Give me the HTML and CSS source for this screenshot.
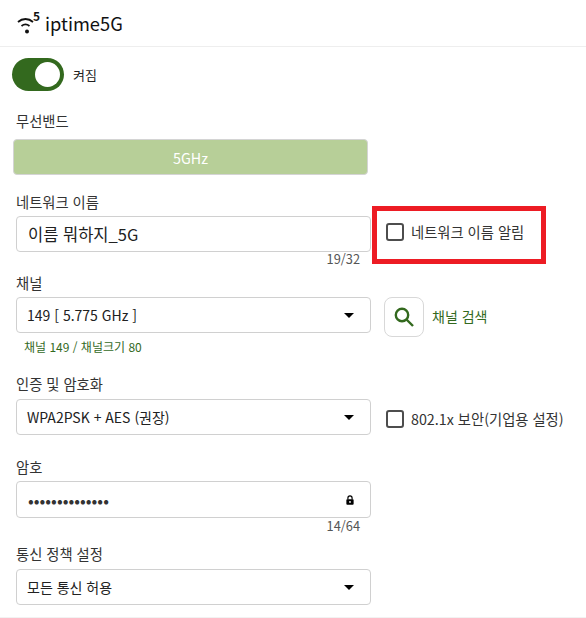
FILE: index.html
```html
<!DOCTYPE html>
<html lang="ko">
<head>
    <meta charset="UTF-8">
    <meta name="viewport" content="width=device-width, initial-scale=1.0">
    <link rel="stylesheet" href="styles.css">
</head>
<body>
    <div class="header">
        <svg class="wifi" width="26" height="26" viewBox="0 0 26 26" fill="none" stroke="#111" stroke-width="1.8">
            <path d="M3 11 C7.5 7 13.5 7 18 11"/>
            <path d="M6.5 15 C9 13 12 13 14.5 15"/>
            <circle cx="12" cy="20.5" r="2" fill="#111" stroke="none"/>
        </svg>
        <span class="wifi-band">5</span>
        <h1>iptime5G</h1>
    </div>

    <div class="form">
        <div class="switch-row">
            <span class="switch"><span class="knob"></span></span>
            <span class="switch-label">켜짐</span>
        </div>

        <div class="label band-label">무선밴드</div>
        <button class="band">5GHz</button>

        <div class="label name-label">네트워크 이름</div>
        <div class="row name-row">
            <div class="control">
                <span>이름 뭐하지_5G</span>
            </div>
            <label class="check highlight"><span class="box"></span>네트워크 이름 알림</label>
        </div>
        <div class="counter">19/32</div>

        <div class="label channel-label">채널</div>
        <div class="row">
            <div class="control small">
                <span>149 [ 5.775 GHz ]</span>
                <span class="caret"></span>
            </div>
            <button class="search">
                <svg width="22" height="22" viewBox="0 0 22 22" fill="none" stroke="#33691e" stroke-width="2.4">
                    <circle cx="9" cy="9" r="6.2"/>
                    <path d="M13.5 13.5 L20 20"/>
                </svg>
            </button>
            <span class="search-label">채널 검색</span>
        </div>
        <div class="hint">채널 149 / 채널크기 80</div>

        <div class="label auth-label">인증 및 암호화</div>
        <div class="row">
            <div class="control small">
                <span>WPA2PSK + AES (권장)</span>
                <span class="caret"></span>
            </div>
            <label class="check plain"><span class="box"></span>802.1x 보안(기업용 설정)</label>
        </div>

        <div class="label pass-label">암호</div>
        <div class="control password">
            <span class="dots">••••••••••••••</span>
            <svg width="10" height="10" viewBox="0 0 10 11" class="lock">
                <path d="M2.7 5V3.2a2.3 2.3 0 0 1 4.6 0V5" fill="none" stroke="#000" stroke-width="1.3"/>
                <rect x="1" y="4.6" width="8" height="6" rx="1" fill="#000"/>
                <circle cx="5" cy="7.6" r="1" fill="#fff"/>
            </svg>
        </div>
        <div class="counter pass-counter">14/64</div>

        <div class="label policy-label">통신 정책 설정</div>
        <div class="control small">
            <span>모든 통신 허용</span>
            <span class="caret"></span>
        </div>
    </div>
</body>
</html>
```

FILE: styles.css
```css
* {
    margin: 0;
    padding: 0;
    box-sizing: border-box;
}

body {
    font-family: "Noto Sans CJK KR", "Noto Sans", sans-serif;
    background: #fff;
    color: #212121;
    height: 618px;
    overflow: hidden;
    border-bottom: 1px solid #f2f2f2;
}

.header {
    height: 47px;
    display: flex;
    align-items: center;
    padding-left: 15px;
    border-bottom: 1px solid #eee;
    position: relative;
}

.wifi {
    margin-top: 2px;
}

.wifi-band {
    position: absolute;
    left: 33px;
    top: 9px;
    font-size: 12px;
    line-height: 14px;
    font-weight: 700;
    color: #111;
}

.header h1 {
    font-size: 18.3px;
    font-weight: 400;
    line-height: 26px;
    color: #111;
    margin-left: 4px;
}

.form {
    padding-left: 16px;
}

.switch-row {
    display: flex;
    align-items: center;
    gap: 9px;
    margin-top: 11px;
    margin-left: -4px;
}

.switch {
    width: 52px;
    height: 33px;
    border-radius: 17px;
    background: #33691e;
    display: flex;
    align-items: center;
    justify-content: flex-end;
    padding-right: 4px;
}

.knob {
    width: 25px;
    height: 25px;
    border-radius: 50%;
    background: #fff;
}

.switch-label {
    font-size: 13px;
    line-height: 20px;
}

.label {
    font-size: 14.3px;
    line-height: 20px;
    color: #333;
}

.band-label {
    margin-top: 20px;
}

.band {
    display: block;
    width: 355px;
    height: 36px;
    margin-top: 8px;
    margin-left: -3px;
    border: 1px solid #d4d4d4;
    border-radius: 4px;
    background: #b7cf98;
    color: #fff;
    font-family: inherit;
    font-size: 14.3px;
    font-weight: 400;
}

.name-label {
    margin-top: 17px;
}

.row {
    display: flex;
    align-items: flex-start;
    width: 570px;
}

.name-row {
    margin-top: 4px;
    height: 36px;
    align-items: center;
}

.control {
    width: 355px;
    height: 36px;
    flex: none;
    display: flex;
    align-items: center;
    justify-content: space-between;
    padding: 0 16px 0 11px;
    border: 1px solid #d0d0d0;
    border-radius: 4px;
    background: #fff;
    font-size: 16.5px;
    color: #212121;
}

.control.small {
    font-size: 14px;
    padding-left: 10px;
}

.caret {
    width: 0;
    height: 0;
    border-left: 5px solid transparent;
    border-right: 5px solid transparent;
    border-top: 5px solid #000;
}

.check {
    display: flex;
    align-items: center;
    font-size: 14.3px;
    line-height: 20px;
    color: #333;
}

.box {
    width: 18px;
    height: 18px;
    border: 2px solid #4d4d4d;
    border-radius: 3px;
    margin-right: 7px;
    flex: none;
}

.highlight {
    width: 174px;
    height: 58px;
    margin-left: 1px;
    margin-top: 2px;
    padding: 0 0 7px 9px;
    border: 5px solid #ed1c24;
    flex: none;
}

.plain {
    margin-left: 15px;
    margin-top: 10px;
    white-space: nowrap;
}

.counter {
    width: 344px;
    text-align: right;
    font-size: 12.8px;
    line-height: 14px;
    color: #555;
}

.pass-counter {
    margin-top: 1px;
}

.channel-label {
    margin-top: 7px;
    margin-bottom: 4px;
}

.search {
    width: 40px;
    height: 40px;
    margin-left: 13px;
    border: 1px solid #d8d8d8;
    border-radius: 8px;
    background: #fff;
    display: flex;
    align-items: center;
    justify-content: center;
    flex: none;
}

.search-label {
    margin-left: 8px;
    margin-top: 9px;
    font-size: 14px;
    line-height: 20px;
    color: #33691e;
}

.hint {
    margin-top: 2px;
    margin-left: 8px;
    font-size: 12px;
    line-height: 16px;
    color: #33691e;
}

.auth-label {
    margin-top: 19px;
    margin-bottom: 5px;
}

.pass-label {
    margin-top: 22px;
    margin-bottom: 4px;
}

.password {
    height: 37px;
    padding-right: 15px;
}

.dots {
    font-size: 17px;
    color: #333;
}

.policy-label {
    margin-top: 11px;
    margin-bottom: 5px;
}
```
